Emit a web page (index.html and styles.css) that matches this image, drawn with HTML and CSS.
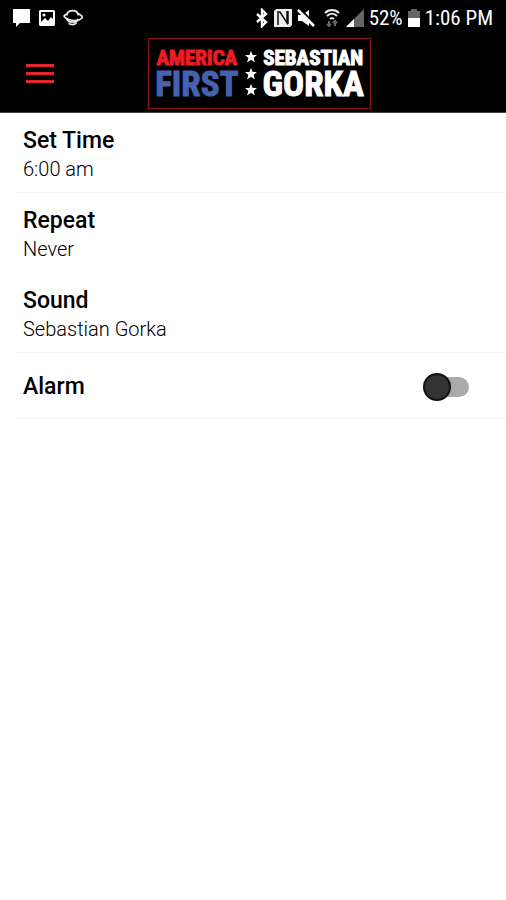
FILE: index.html
```
<!DOCTYPE html>
<html lang="en">
<head>
<meta charset="utf-8">
<meta name="viewport" content="width=device-width, initial-scale=1">
<title>Alarm</title>
<link rel="stylesheet" href="styles.css">
</head>
<body>
<div class="status">
  <div class="status-group notices">
    <svg width="19" height="20" viewBox="0 0 19 20"><path d="M1 1h17v14H8l-4 4v-4H1z" fill="#fff"/></svg>
    <svg width="18" height="18" viewBox="0 0 18 18"><path fill="#fff" fill-rule="evenodd" d="M2 1h14l1 1v14l-1 1H2l-1-1V2zM3 3v10l4-4 3 3 3-4 2 2V3z"/><circle cx="6" cy="6" r="1.5" fill="#fff"/></svg>
    <svg width="20" height="18" viewBox="0 0 22 20" fill="none" stroke="#eee"><path stroke-width="2" d="M4 7C5 0 16 0 17 7M4 10c1 6 11 6 13 1"/><path stroke-width="1.8" d="M4 6C-1 7 1 10 7 12s13 0 14-2-2-4-5-5M6 16c3 2 7 2 9-1"/></svg>
  </div>
  <div class="status-group">
    <svg width="14" height="20" viewBox="0 0 14 20" fill="none" stroke="#fff" stroke-width="2.4"><path d="M2 6l9 8-4 4V2l4 4-9 8"/></svg>
    <svg width="18" height="18" viewBox="0 0 18 18"><path d="M0 2l2-2h16v16l-2 2H0z" fill="#eee"/><path d="M4 16V3h2l7 11V2M4 6v10M14 15V2" fill="none" stroke="#111" stroke-width="1.5"/></svg>
    <svg width="18" height="18" viewBox="0 0 18 18"><path d="M1 6h4l7-5v16l-7-5H1z" fill="#fff"/><path d="M3 0l16 16" stroke="#000" stroke-width="2"/><path d="M1 1l16 16" stroke="#fff" stroke-width="2.6"/></svg>
    <svg class="wifi" width="16" height="18" viewBox="0 0 16 18" fill="none" stroke="#eee" stroke-width="2"><path d="M1 4c4-4 10-4 14 0M3 7c3-3 7-3 10 0M6 10c1-1 3-1 4 0"/><path stroke="#666" d="M5 12v5M3 15l2 2 2-2M11 17v-5M9 14l2-2 2 2"/></svg>
    <svg class="signal" width="18" height="18" viewBox="0 0 18 18"><path d="M18 0v18H0z" fill="#666"/><path d="M8 10v8H0z" fill="#fff"/></svg>
    <span>52%</span>
    <svg width="12" height="18" viewBox="0 0 12 18"><path d="M3 0h6v2h3v7H0V2h3z" fill="#666"/><path d="M0 9h12v9H0z" fill="#fff"/></svg>
    <span>1:06 PM</span>
  </div>
</div>
<header class="header">
  <button class="menu" aria-label="Menu"><span></span><span></span><span></span></button>
  <a class="logo" href="#">
    <span class="words"><span class="small red">AMERICA</span><span class="big blue">FIRST</span></span>
    <svg width="12" height="46" viewBox="0 0 12 46" fill="#fff"><defs><path id="star" d="M6 0l1.600 4H12L8.600 6.900 10 11.500 6 8.800 2 11.500 3.400 6.900 0 4h4.400z"/></defs><use href="#star"/><use href="#star" y="17"/><use href="#star" y="33"/></svg>
    <span class="words"><span class="small">SEBASTIAN</span><span class="big">GORKA</span></span>
  </a>
</header>
<main class="settings">
  <button class="row line"><span class="title">Set Time</span><span class="value">6:00 am</span></button>
  <button class="row"><span class="title">Repeat</span><span class="value">Never</span></button>
  <button class="row line"><span class="title">Sound</span><span class="value">Sebastian Gorka</span></button>
  <div class="row line alarm"><label class="title" for="alarm">Alarm</label><input class="switch" id="alarm" type="checkbox" role="switch"></div>
</main>
</body>
</html>
```
FILE: styles.css
```
*, *::before { box-sizing: border-box; }
body { margin: 0; background: #fff; color: #000; font-family: Roboto, sans-serif; }
button { border: 0; background: none; font: inherit; color: inherit; text-align: left; padding: 0; }
svg { display: block; flex: none; }

.status { display: flex; justify-content: space-between; align-items: center; height: 35px; padding: 0 13px 0 12px; background: #000; color: #fff; font-family: "Roboto Condensed", Roboto, sans-serif; font-size: 21px; font-weight: 400; }
.status-group { display: flex; align-items: center; gap: 5px; }
.notices { gap: 7px; }
.signal { margin-left: 1px; }
.wifi { margin-left: 4px; }

.header { display: grid; grid-template-columns: 1fr auto 1fr; align-items: center; height: 78px; padding: 0 13px 0 26px; background: #000; border-bottom: 1px solid #444; }
.menu { display: grid; gap: 5px; width: 28px; padding: 8px 0; }
.menu span { height: 3px; background: #e0262b; }
.logo { display: flex; align-items: center; gap: 6px; height: 71px; padding: 0 6px; border: 1px solid #8c1418; color: #fff; text-decoration: none; font-family: "Liberation Sans Narrow", "Roboto Condensed", sans-serif; font-weight: 700; }
.words { display: grid; justify-items: center; -webkit-text-stroke: 1px currentColor; }
.small { font-size: 21px; line-height: 22px; }
.big { font-size: 35px; line-height: 32px; }
.red { color: #ed1c24; }
.blue { color: #4561b0; }

.row { display: flex; flex-direction: column; justify-content: center; width: calc(100% - 16px); height: 80px; margin-left: 16px; padding: 4px 7px 0; border-bottom: 1px solid transparent; }
.line { border-bottom-color: #f3f3f3; }
.title { font-size: 23px; line-height: 28px; font-weight: 500; }
.value { font-size: 20px; line-height: 28px; font-weight: 300; }
.alarm { flex-direction: row; align-items: center; justify-content: space-between; height: 66px; padding: 2px 37px 0 7px; }
.switch { appearance: none; position: relative; width: 44px; height: 20px; margin: 0; border-radius: 10px; background: linear-gradient(90deg, transparent 14px, #aaa 14px); }
.switch::before { content: ""; position: absolute; left: -2px; top: -4px; width: 28px; height: 28px; border: 2px solid #111; border-radius: 50%; background: #333; }
.switch:checked::before { left: 18px; }
```
